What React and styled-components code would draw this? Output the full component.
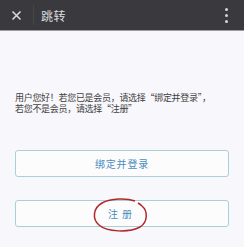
import React from 'react';
import styled, { createGlobalStyle } from 'styled-components';

const GlobalStyle = createGlobalStyle`
  html, body {
    margin: 0;
    padding: 0;
    background: #f8f7fb;
  }
  body {
    font-family: "Noto Sans CJK SC", "Noto Sans", sans-serif;
  }
`;

const Page = styled.div`
  width: 244px;
  height: 247px;
  display: flex;
  flex-direction: column;
  background: #f8f7fb;
  overflow: hidden;
`;

const TopBar = styled.div`
  height: 31px;
  display: flex;
  align-items: center;
  background: #3a393e;
  border-bottom: 1px solid #9c9ba0;
  box-sizing: border-box;
`;

const CloseButton = styled.div`
  width: 33px;
  height: 31px;
  display: flex;
  align-items: center;
  justify-content: center;
  padding-right: 1px;
  box-sizing: border-box;
`;

const Divider = styled.div`
  width: 1px;
  height: 20px;
  background: #46454a;
`;

const Title = styled.div`
  flex: 1;
  margin-left: 7px;
  font-size: 12px;
  color: #dcdcde;
  letter-spacing: 0.5px;
`;

const MoreButton = styled.div`
  width: 24px;
  margin-right: 6px;
  height: 31px;
  display: flex;
  flex-direction: column;
  align-items: center;
  justify-content: center;
  gap: 3px;
`;

const Dot = styled.span`
  width: 3px;
  height: 3px;
  border-radius: 50%;
  background: #d6d6d8;
`;

const Body = styled.div`
  padding: 61px 15px 0;
`;

const Notice = styled.div`
  font-size: 9px;
  color: #404040;
  letter-spacing: -0.3px;
`;

const NoticeLine = styled.div`
  height: 11px;
  line-height: 11px;
  white-space: nowrap;
`;

const Actions = styled.div`
  margin-top: 36px;
  display: flex;
  flex-direction: column;
  gap: 23px;
  width: 214px;
`;

const ActionButton = styled.div`
  position: relative;
  height: 27px;
  display: flex;
  align-items: center;
  justify-content: center;
  border: 1px solid #a9d0d6;
  border-radius: 3px;
  background: #fdfcfd;
  box-sizing: border-box;
  font-size: 10px;
  letter-spacing: ${p => p.$spacing || '0.8px'};
  color: #4b8dbd;
`;

const Circle = styled.svg`
  position: absolute;
  left: 75px;
  top: -4px;
  pointer-events: none;
`;

export default function App() {
  return (
    <Page>
      <GlobalStyle />
      <TopBar>
        <CloseButton>
          <svg width="11" height="11" viewBox="0 0 11 11">
            <path d="M1.5 1.5 L9.5 9.5 M9.5 1.5 L1.5 9.5" stroke="#d8d8da" strokeWidth="1.6" />
          </svg>
        </CloseButton>
        <Divider />
        <Title>跳转</Title>
        <MoreButton>
          <Dot />
          <Dot />
          <Dot />
        </MoreButton>
      </TopBar>
      <Body>
        <Notice>
          <NoticeLine>用户您好！若您已是会员，请选择“绑定并登录”，</NoticeLine>
          <NoticeLine>若您不是会员，请选择“注册”</NoticeLine>
        </Notice>
        <Actions>
          <ActionButton>绑定并登录</ActionButton>
          <ActionButton $spacing="4px">
            注册
            <Circle width="58" height="37" viewBox="0 0 58 37">
              <path
                d="M44 4 C 36 1, 20 1, 11 6 C 2 11, 1 22, 8 28 C 16 35, 38 36, 49 30 C 57 25, 57 14, 51 9 C 50 8, 49 7, 47 6"
                fill="none"
                stroke="#b0262b"
                strokeWidth="1.5"
              />
            </Circle>
          </ActionButton>
        </Actions>
      </Body>
    </Page>
  );
}
